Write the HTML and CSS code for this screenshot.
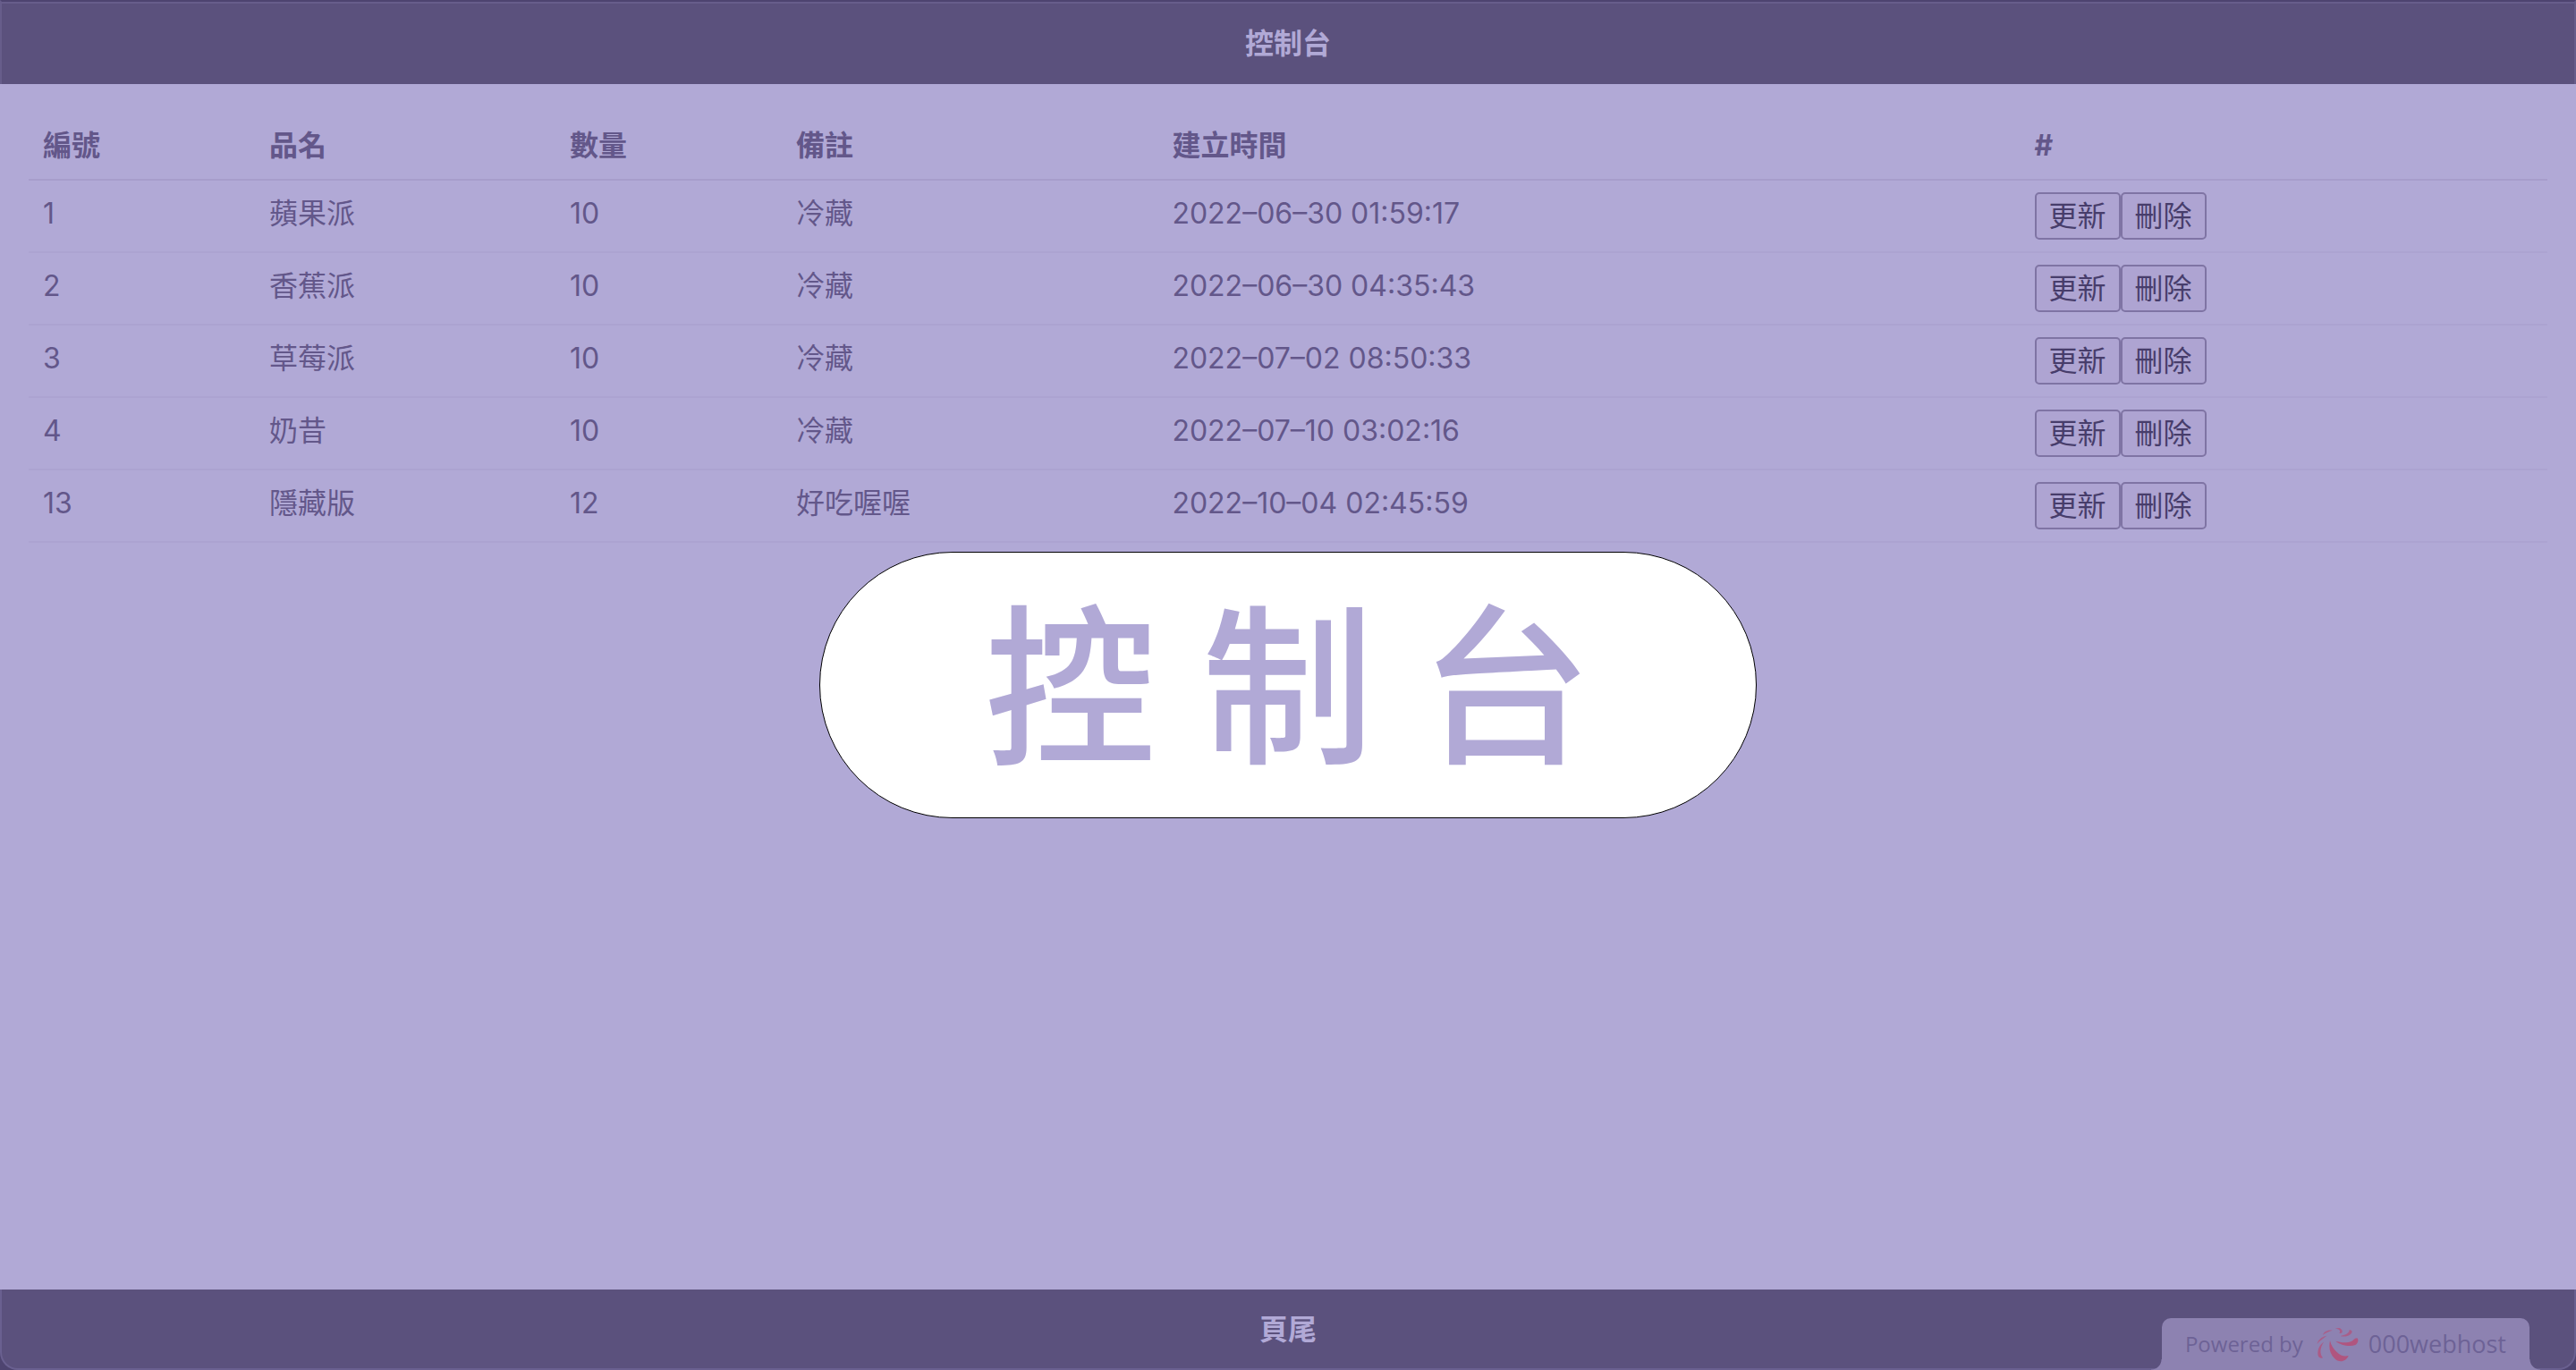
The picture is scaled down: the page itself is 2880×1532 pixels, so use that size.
FILE: index.html
```html
<!DOCTYPE html>
<html lang="zh-Hant">
<head>
<meta charset="utf-8">
<title>控制台</title>
<link rel="stylesheet" href="styles.css">
</head>
<body>
<header class="bar bar-top"><h1 class="bar-title">控制台</h1></header>
<main class="content">
<table class="items">
<colgroup><col class="c-id"><col class="c-name"><col class="c-qty"><col class="c-note"><col class="c-time"><col class="c-act"></colgroup>
<thead><tr><th>編號</th><th>品名</th><th>數量</th><th>備註</th><th>建立時間</th><th>#</th></tr></thead>
<tbody>
<tr><td>1</td><td>蘋果派</td><td>10</td><td>冷藏</td><td>2022–06–30 01:59:17</td><td><div class="actions"><button class="btn" type="button">更新</button><button class="btn" type="button">刪除</button></div></td></tr>
<tr><td>2</td><td>香蕉派</td><td>10</td><td>冷藏</td><td>2022–06–30 04:35:43</td><td><div class="actions"><button class="btn" type="button">更新</button><button class="btn" type="button">刪除</button></div></td></tr>
<tr><td>3</td><td>草莓派</td><td>10</td><td>冷藏</td><td>2022–07–02 08:50:33</td><td><div class="actions"><button class="btn" type="button">更新</button><button class="btn" type="button">刪除</button></div></td></tr>
<tr><td>4</td><td>奶昔</td><td>10</td><td>冷藏</td><td>2022–07–10 03:02:16</td><td><div class="actions"><button class="btn" type="button">更新</button><button class="btn" type="button">刪除</button></div></td></tr>
<tr><td>13</td><td>隱藏版</td><td>12</td><td>好吃喔喔</td><td>2022–10–04 02:45:59</td><td><div class="actions"><button class="btn" type="button">更新</button><button class="btn" type="button">刪除</button></div></td></tr>
</tbody>
</table>
</main>
<footer class="bar bar-bottom"><h2 class="bar-title">頁尾</h2></footer>
<div class="splash"><div class="splash-pill">控 制 台</div></div>
<a class="badge" href="#"><span class="badge-by">Powered by</span>
<svg class="badge-logo" viewBox="35 25 147 123" aria-hidden="true"><g fill="#b0557f"><path d="M83 74C78 95 82 118 98 133C112 148 136 146 145 124C132 128 118 124 106 112C94 101 87 90 83 74Z"/><path d="M102 75C118 80 140 82 156 75C163 72 163 66 174 65C180 70 177 83 168 88C148 96 118 88 102 75Z"/><path d="M62 78C46 88 37 112 45 128Q50 134 59 131C47 116 50 96 62 78Z" opacity=".85"/><path d="M72 57C54 60 42 72 40 84C48 74 60 66 72 57ZM91 39C75 36 62 44 59 54C68 48 78 43 91 39ZM101 34C112 26 126 34 124 45Q120 51 114 48C120 42 114 33 101 34ZM148 37C163 39 157 52 143 57C135 60 124 61 118 58C132 55 148 50 148 37Z" opacity=".8"/></g></svg>
<span class="badge-host">000webhost</span></a>
</body>
</html>
```
FILE: styles.css
```css
* { box-sizing: border-box; }
body {
  margin: 0;
  min-height: 100vh;
  display: flex;
  flex-direction: column;
  background: #4e4470;
  color: #63578a;
  font: 32px/48px Inter, "Noto Sans CJK TC", sans-serif;
}
.bar {
  display: flex;
  justify-content: center;
  align-items: center;
  background: #5b517d;
  color: #b1a9d6;
}
.bar-top { height: 94px; padding-top: 2px; border: solid #675d8b; border-width: 2px 2px 0; border-top-color: #4e4470; box-shadow: inset 0 2px #675d8b; }
.bar-bottom { height: 90px; padding-top: 2px; border: solid #6a6090; border-width: 0 2px 2px; border-radius: 0 0 20px 20px; }
.bar-title { margin: 0; font-size: 32px; line-height: 48px; font-weight: 700; }
.content { flex: 1; padding: 39px 32px; background: #b1a9d6; }
.items { width: 100%; table-layout: fixed; border-collapse: collapse; text-align: left; }
.c-id, .c-qty { width: 8.98%; }
.c-name { width: 11.94%; }
.c-note { width: 14.93%; }
.c-time { width: 34.24%; }
.c-act { width: 20.93%; }
.items th, .items td { padding: 0 16px; border-bottom: 2px solid #aca3d1; }
.items th { height: 68px; padding-bottom: 8px; font-weight: 700; border-bottom-color: #a79dcb; }
.items td { height: 81px; padding-top: 13px; vertical-align: top; }
.actions { display: flex; }
.btn {
  height: 53px;
  padding: 0 14px;
  border: 2px solid #7f74a4;
  border-radius: 5px;
  background: #aea4d2;
  color: #473d6b;
  font: inherit;
}
.splash { position: fixed; inset: 0; display: flex; align-items: center; justify-content: center; pointer-events: none; }
.splash-pill {
  padding: 31px 184px 25px;
  border: 1px solid #000;
  border-radius: 150px;
  background: #fff;
  color: #b1a9d6;
  font-size: 192px;
  line-height: 240px;
  font-weight: 500;
  white-space: nowrap;
}
.badge {
  position: fixed;
  right: 52px;
  bottom: 0;
  height: 58px;
  padding: 0 26px;
  display: flex;
  align-items: center;
  border-radius: 10px 10px 0 0;
  background: #8d82b1;
  color: #6d6296;
  font: 24px/32px "Open Sans", sans-serif;
  text-decoration: none;
}
.badge::before, .badge::after {
  content: "";
  position: absolute;
  bottom: 0;
  width: 12px;
  height: 12px;
}
.badge::before { right: 100%; background: radial-gradient(circle at 0 0, transparent 11px, #8d82b1 12px); }
.badge::after { left: 100%; background: radial-gradient(circle at 100% 0, transparent 11px, #8d82b1 12px); }
.badge-logo { width: 49px; height: 41px; margin: 0 10px 0 14px; }
.badge-host { font-size: 27px; font-weight: 500; }
```
